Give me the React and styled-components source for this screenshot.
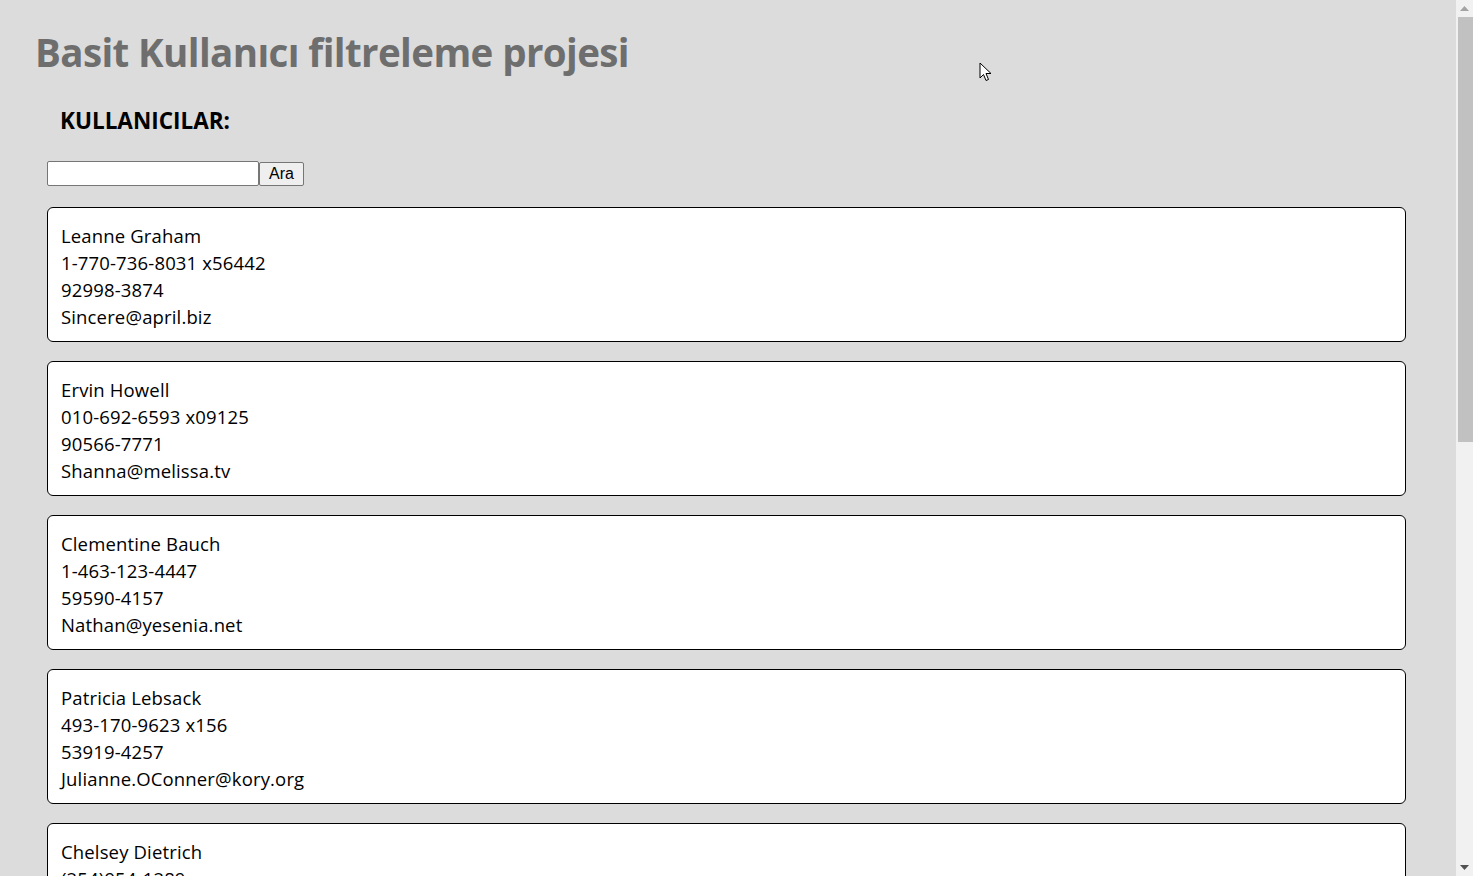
import React from "react";
import styled, { createGlobalStyle } from "styled-components";

const GlobalStyle = createGlobalStyle`
  html, body { margin: 0; padding: 0; background: #dcdcdc; overflow: hidden; }
  body { font-family: "Open Sans", "Noto Sans", sans-serif; }
`;

const users = [
  ["Leanne Graham", "1-770-736-8031 x56442", "92998-3874", "Sincere@april.biz"],
  ["Ervin Howell", "010-692-6593 x09125", "90566-7771", "Shanna@melissa.tv"],
  ["Clementine Bauch", "1-463-123-4447", "59590-4157", "Nathan@yesenia.net"],
  ["Patricia Lebsack", "493-170-9623 x156", "53919-4257", "Julianne.OConner@kory.org"],
  ["Chelsey Dietrich", "(254)954-1289", "33263", "Lucio_Hettinger@annie.ca"],
  ["Mrs. Dennis Schulist", "1-477-935-8478 x6430", "23505-1337", "Karley_Dach@jasper.info"],
  ["Kurtis Weissnat", "210.067.6132", "58804-1099", "Telly.Hoeger@billy.biz"],
  ["Nicholas Runolfsdottir V", "586.493.6943 x140", "45169", "Sherwood@rosamond.me"],
  ["Glenna Reichert", "(775)976-6794 x41206", "76495-3109", "Chaim_McDermott@dana.io"],
  ["Clementina DuBuque", "024-648-3804", "31428-2261", "Rey.Padberg@karina.biz"],
];

const Shell = styled.div`
  display: flex;
  height: 100vh;
  overflow: hidden;
`;

const Viewport = styled.main`
  flex: 1;
  min-width: 0;
  height: 100vh;
  overflow: hidden;
`;

const Page = styled.div`
  padding: 0 50px 20px 47px;
`;

const Title = styled.h1`
  margin: 0 0 0 -12px;
  padding-top: 29px;
  font-family: "Open Sans", sans-serif;
  font-weight: 700;
  font-size: 38.5px;
  line-height: 46px;
  letter-spacing: -0.6px;
  color: #6e6e6e;
`;

const SubTitle = styled.h2`
  margin: 31px 0 0 13px;
  font-family: "Open Sans", sans-serif;
  font-weight: 700;
  font-size: 22.5px;
  line-height: 30px;
  color: #000;
`;

const SearchRow = styled.form`
  display: flex;
  align-items: flex-start;
  margin-top: 25px;
`;

const SearchInput = styled.input`
  box-sizing: border-box;
  width: 212px;
  height: 25px;
  border: 1px solid #767676;
  border-radius: 2px;
  background: #fff;
  font-size: 16px;
  padding: 1px 2px;
  margin: 0;
`;

const SearchButton = styled.button`
  box-sizing: border-box;
  width: 45px;
  height: 24px;
  margin: 1px 0 0 0;
  border: 1px solid #767676;
  border-radius: 2px;
  background: #efefef;
  font-family: "Liberation Sans", Arial, sans-serif;
  font-size: 16px;
  color: #000;
  padding: 0;
`;

const List = styled.div`
  display: flex;
  flex-direction: column;
  gap: 19px;
  margin-top: 21px;
`;

const Card = styled.div`
  box-sizing: border-box;
  height: 135px;
  background: #fff;
  border: 1px solid #000;
  border-radius: 6px;
  padding: 14px 13px 11px 13px;
`;

const Line = styled.div`
  font-family: "Open Sans", sans-serif;
  font-size: 18.5px;
  line-height: 27px;
  letter-spacing: 0.15px;
  color: #000;
  white-space: nowrap;
`;

const ScrollBar = styled.div`
  width: 17px;
  height: 100vh;
  background: #f1f1f1;
  display: flex;
  flex-direction: column;
`;

const ArrowButton = styled.div`
  height: 17px;
  display: flex;
  align-items: center;
  justify-content: center;
`;

const Track = styled.div`
  flex: 1;
  display: flex;
  flex-direction: column;
  padding-left: 2px;
`;

const Thumb = styled.div`
  height: 425px;
  background: #c1c1c1;
`;

const Cursor = styled.svg`
  position: fixed;
  left: 979px;
  top: 62px;
  pointer-events: none;
`;

export default function App() {
  return (
    <>
      <GlobalStyle />
      <Shell>
        <Viewport>
          <Page>
            <Title>Basit Kullanıcı filtreleme projesi</Title>
            <SubTitle>KULLANICILAR:</SubTitle>
            <SearchRow onSubmit={(e) => e.preventDefault()}>
              <SearchInput type="text" />
              <SearchButton type="submit">Ara</SearchButton>
            </SearchRow>
            <List>
              {users.map((u) => (
                <Card key={u[0]}>
                  {u.map((l) => (
                    <Line key={l}>{l}</Line>
                  ))}
                </Card>
              ))}
            </List>
          </Page>
        </Viewport>
        <ScrollBar>
          <ArrowButton>
            <svg width="9" height="5" viewBox="0 0 9 5">
              <polygon points="0,5 9,5 4.5,0" fill="#a3a3a3" />
            </svg>
          </ArrowButton>
          <Track>
            <Thumb />
          </Track>
          <ArrowButton>
            <svg width="9" height="5" viewBox="0 0 9 5">
              <polygon points="0,0 9,0 4.5,5" fill="#505050" />
            </svg>
          </ArrowButton>
        </ScrollBar>
      </Shell>
      <Cursor width="14" height="21" viewBox="0 0 14 21">
        <path d="M1 1 L1 16 L4.5 12.5 L7 18.5 L9.5 17.5 L7 11.5 L12 11.5 Z" fill="#fff" stroke="#000" strokeWidth="1" strokeLinejoin="round" />
      </Cursor>
    </>
  );
}
